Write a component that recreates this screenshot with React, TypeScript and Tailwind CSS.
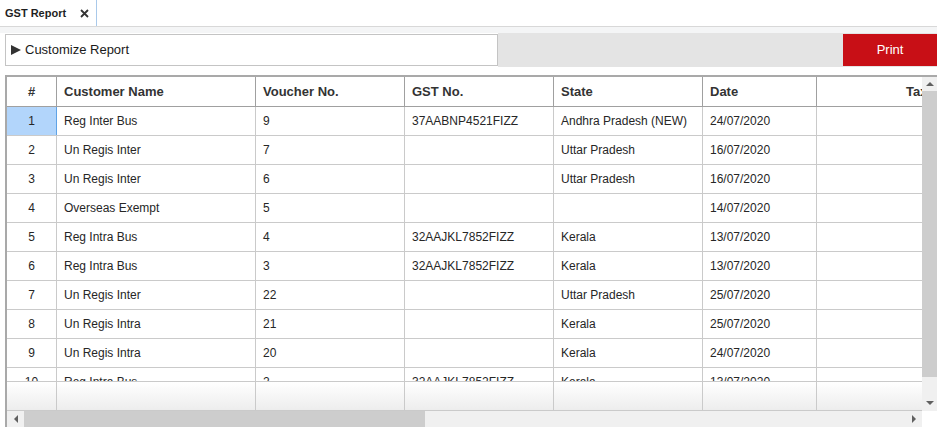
import React from 'react';

const rows = [
  { no: '1', name: 'Reg Inter Bus', voucher: '9', gst: '37AABNP4521FIZZ', state: 'Andhra Pradesh (NEW)', date: '24/07/2020' },
  { no: '2', name: 'Un Regis Inter', voucher: '7', gst: '', state: 'Uttar Pradesh', date: '16/07/2020' },
  { no: '3', name: 'Un Regis Inter', voucher: '6', gst: '', state: 'Uttar Pradesh', date: '16/07/2020' },
  { no: '4', name: 'Overseas Exempt', voucher: '5', gst: '', state: '', date: '14/07/2020' },
  { no: '5', name: 'Reg Intra Bus', voucher: '4', gst: '32AAJKL7852FIZZ', state: 'Kerala', date: '13/07/2020' },
  { no: '6', name: 'Reg Intra Bus', voucher: '3', gst: '32AAJKL7852FIZZ', state: 'Kerala', date: '13/07/2020' },
  { no: '7', name: 'Un Regis Inter', voucher: '22', gst: '', state: 'Uttar Pradesh', date: '25/07/2020' },
  { no: '8', name: 'Un Regis Intra', voucher: '21', gst: '', state: 'Kerala', date: '25/07/2020' },
  { no: '9', name: 'Un Regis Intra', voucher: '20', gst: '', state: 'Kerala', date: '24/07/2020' },
  { no: '10', name: 'Reg Intra Bus', voucher: '2', gst: '32AAJKL7852FIZZ', state: 'Kerala', date: '13/07/2020' },
];

const cols = 'grid grid-cols-[50px_199px_149px_149px_149px_114px_182px] w-[992px]';

function Arrow({ dir }: { dir: 'up' | 'down' | 'left' | 'right' }) {
  const pts = {
    up: '0,5 4,1 8,5',
    down: '0,1 4,5 8,1',
    left: '5,0 1,4 5,8',
    right: '1,0 5,4 1,8',
  }[dir];
  const vertical = dir === 'up' || dir === 'down';
  return (
    <svg width={vertical ? 8 : 6} height={vertical ? 6 : 8} viewBox={vertical ? '0 0 8 6' : '0 0 6 8'}>
      <polygon points={pts} fill="#606060" />
    </svg>
  );
}

export default function App() {
  return (
    <div className="w-[937px] h-[427px] overflow-hidden bg-white font-['Liberation_Sans',Arial,sans-serif] text-[#262626]">
      {/* Tab strip */}
      <div className="h-[27px] flex border-b border-[#d8d8d8]">
        <div className="w-[97px] flex items-center justify-between pl-[5px] pr-[7px] border-r border-[#a9c9ea] bg-white">
          <span className="text-[11px] font-bold text-[#1f1f1f]">GST Report</span>
          <svg width="9" height="9" viewBox="0 0 9 9">
            <path d="M1 1 L8 8 M8 1 L1 8" stroke="#333" strokeWidth="1.8" />
          </svg>
        </div>
        <div className="flex-1" />
      </div>
      <div className="h-[6px] bg-[#f4f5f6]" />

      {/* Toolbar */}
      <div className="h-[34px] flex">
        <div className="w-[498px] bg-white pl-[5px] flex items-center">
          <div className="h-[32px] w-full border border-[#c4c4c4] flex items-center pl-[5px] gap-[4px]">
            <svg width="10" height="10" viewBox="0 0 10 10">
              <polygon points="0,0 10,5 0,10" fill="#333" />
            </svg>
            <span className="text-[13px] text-[#1a1a1a]">Customize Report</span>
          </div>
        </div>
        <div className="flex-1 bg-[#e4e4e4] flex items-center justify-end">
          <div className="w-[94px] h-[32px] bg-[#c80f16] flex items-center justify-center text-[13px] text-white">
            Print
          </div>
        </div>
      </div>
      <div className="h-[8px]" />

      {/* Grid */}
      <div className="ml-[5px] h-[352px] border-l-2 border-t-2 border-[#a9a9a9] flex flex-col">
        <div className="flex flex-1 min-h-0">
          <div className="flex-1 overflow-hidden flex flex-col">
            <div className={`${cols} h-[30px] border-b border-[#a0a0a0] text-[13px] font-bold text-[#333]`}>
              {['#', 'Customer Name', 'Voucher No.', 'GST No.', 'State', 'Date', 'Taxable Value'].map((h, i) => (
                <div
                  key={h}
                  className={`flex items-center border-r border-[#a0a0a0] ${
                    i === 0 ? 'justify-center' : i === 6 ? 'justify-end pr-[7px]' : 'pl-[7px]'
                  }`}
                >
                  {h}
                </div>
              ))}
            </div>
            <div className="h-[274px] overflow-hidden">
              {rows.map((r, idx) => (
                <div key={r.no} className={`${cols} h-[29px] border-b border-[#cacaca] text-[12px]`}>
                  <div
                    className={`flex items-center justify-center border-r ${
                      idx === 0 ? 'bg-[#b2d5fb] border-[#5fa3e6]' : 'border-[#cacaca]'
                    }`}
                  >
                    {r.no}
                  </div>
                  <div className="flex items-center pl-[7px] border-r border-[#cacaca]">{r.name}</div>
                  <div className="flex items-center pl-[7px] border-r border-[#cacaca]">{r.voucher}</div>
                  <div className="flex items-center pl-[7px] border-r border-[#cacaca]">{r.gst}</div>
                  <div className="flex items-center pl-[7px] border-r border-[#cacaca]">{r.state}</div>
                  <div className="flex items-center pl-[7px] border-r border-[#cacaca]">{r.date}</div>
                  <div className="border-r border-[#cacaca]" />
                </div>
              ))}
            </div>
            <div className={`${cols} h-[30px] border-t border-b border-[#cacaca] bg-linear-to-b from-white to-[#ededed]`}>
              {[0, 1, 2, 3, 4, 5, 6].map((i) => (
                <div key={i} className="border-r border-[#cacaca]" />
              ))}
            </div>
          </div>
          {/* Vertical scrollbar */}
          <div className="w-[15px] flex flex-col bg-[#f0f0f0]">
            <div className="h-[14px] flex items-center justify-center">
              <Arrow dir="up" />
            </div>
            <div className="h-[286px] bg-[#cdcdcd]" />
            <div className="flex-1" />
            <div className="h-[16px] flex items-center justify-center">
              <Arrow dir="down" />
            </div>
          </div>
        </div>
        {/* Horizontal scrollbar */}
        <div className="h-[16px] flex">
          <div className="flex-1 flex bg-[#f0f0f0]">
            <div className="w-[17px] flex items-center justify-center">
              <Arrow dir="left" />
            </div>
            <div className="w-[401px] bg-[#cdcdcd]" />
            <div className="flex-1" />
            <div className="w-[17px] flex items-center justify-center">
              <Arrow dir="right" />
            </div>
          </div>
          <div className="w-[15px] bg-white" />
        </div>
      </div>
    </div>
  );
}
